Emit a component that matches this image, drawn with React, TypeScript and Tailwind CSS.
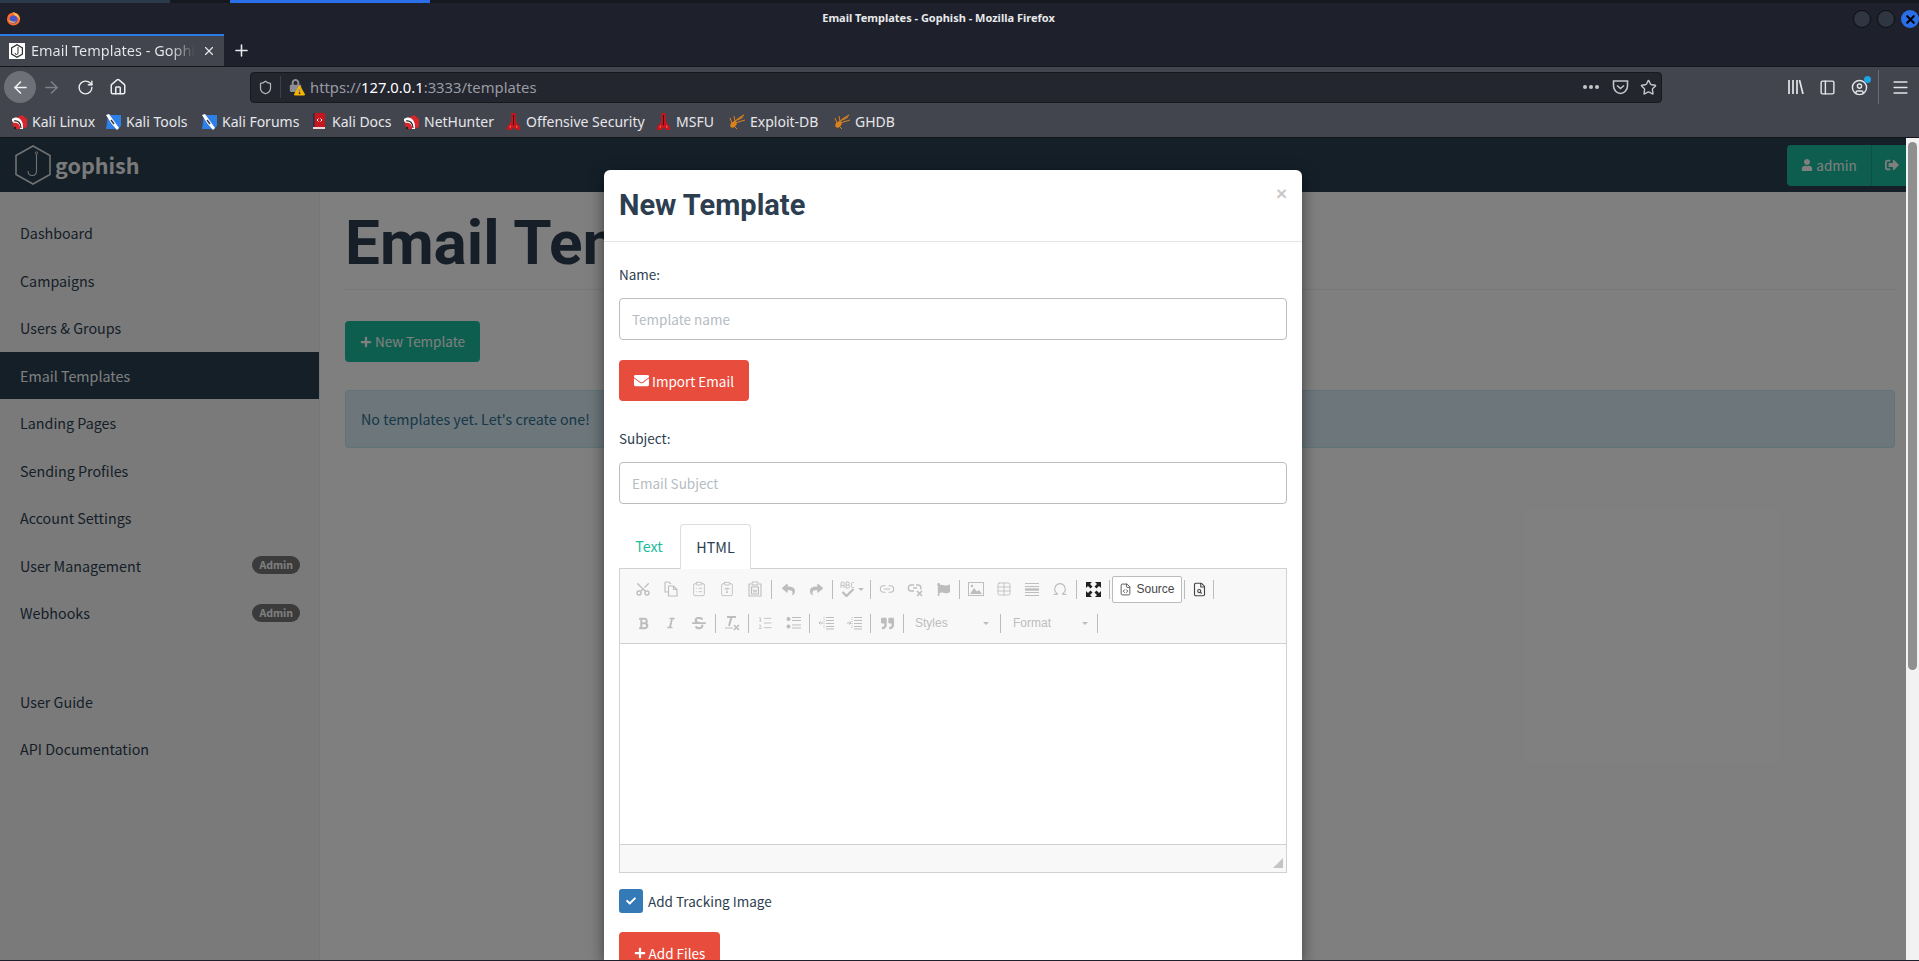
import {
  Scissors, ClipboardList, ClipboardType, Table, Omega, Link2,
  ListOrdered, FileCode, FileSearch, RotateCw, Home, ArrowLeft, ArrowRight, Shield,
  Star, PanelLeft, CircleUser, Menu, Plus, X,
} from "lucide-react";
import { FaUser, FaSignOutAlt, FaEnvelope, FaPlus, FaCheck, FaReply, FaShare, FaFlag, FaQuoteRight, FaLock, FaExclamationTriangle, FaBold, FaItalic, FaStrikethrough } from "react-icons/fa";
import type { ReactNode } from "react";

const srcSans = "font-['Noto_Sans_CJK_SC','Noto_Sans',sans-serif]";

function KaliIcon() {
  return (
    <svg width="17" height="16" viewBox="0 0 17 16">
      <path d="M1 6 L11 1 L16 5 L16 13 L11 15 L3 15 Z" fill="#d8262c" />
      <path d="M1 5 C6 1 13 5 12 15 L9 15 C9.5 10 6 8 3 9 L1 7 Z" fill="#fff" />
      <path d="M3 7 C7 6 10 9 10 14" fill="none" stroke="#222" strokeWidth="1.2" />
      <circle cx="4" cy="14" r="1.2" fill="#222" />
    </svg>
  );
}

function ToolsIcon() {
  return (
    <svg width="17" height="16" viewBox="0 0 17 16">
      <path d="M3 1 H16 V12 L13 15 H1 Z" fill="#2f7fe8" />
      <path d="M1 1 L4 0 L9 7 L14 14 L12 16 L6 9 Z" fill="#fff" />
      <path d="M6 6 L9 10" stroke="#333" strokeWidth="1.4" />
    </svg>
  );
}

function DocsIcon() {
  return (
    <svg width="14" height="17" viewBox="0 0 14 17">
      <rect x="1" y="0" width="12" height="14" fill="#c4161c" />
      <rect x="1" y="14" width="12" height="2" fill="#e8d8d8" />
      <rect x="1" y="0" width="1.5" height="14" fill="#1f2a55" />
      <path d="M5 7 L6.5 5.5 M5 7 L6.5 8.5 M10 7 L8.5 5.5 M10 7 L8.5 8.5" stroke="#fff" strokeWidth="1" />
    </svg>
  );
}

function DartIcon() {
  return (
    <svg width="15" height="18" viewBox="0 0 15 18">
      <path d="M5.5 0 H9.5 L10 9 L14 14 V17 H9.5 L8.5 15 H6.5 L5.5 17 H1 V14 L5 9 Z" fill="#c8141c" />
      <path d="M7 2 H8 V12 H7 Z" fill="#3a0a0c" />
      <path d="M3 14 L5 12 V15 Z M12 14 L10 12 V15 Z" fill="#ef5a5a" />
    </svg>
  );
}

function MothIcon() {
  return (
    <svg width="18" height="16" viewBox="0 0 18 16" fill="none" stroke="#d9821e">
      <path d="M3 13 C5 8 9 5 16 1" strokeWidth="1.2" />
      <path d="M7 9 L17 6 M5 11 L9 15 M4 9 L2 4 M7 7 L6 2 M10 6 L15 3" strokeWidth="1" />
      <ellipse cx="5.5" cy="10.5" rx="3.5" ry="2.5" fill="#d9821e" stroke="none" transform="rotate(-40 5.5 10.5)" />
    </svg>
  );
}

function Bookmark({ icon, label, width }: { icon: ReactNode; label: string; width: string }) {
  return (
    <div className={`flex items-center gap-[4px] ${width}`}>
      <span className="flex w-[18px] justify-center">{icon}</span>
      <span className="text-[14px] text-[#e6e7ea] whitespace-nowrap">{label}</span>
    </div>
  );
}

function Browser() {
  return (
    <div className="font-['Noto_Sans',sans-serif]">
      <div className="flex h-[3px] bg-[#16181f]">
        <div className="w-[170px] bg-[#2a3a4a]" />
        <div className="w-[60px]" />
        <div className="w-[200px] bg-[#2a6fe8]" />
      </div>
      <div className="relative flex h-[31px] items-center justify-center bg-[#1e212b] pr-[42px]">
        <svg className="absolute left-[6px] top-[8px]" width="15" height="15" viewBox="0 0 16 16">
          <circle cx="8" cy="8.5" r="7" fill="#ff6a2b" />
          <path d="M7 1 C11 2 15 5 15 10 C13 6 11 6 9.5 5 Z" fill="#ffbd4f" />
          <circle cx="8" cy="9" r="4.2" fill="#4a55c9" />
          <path d="M3 9 C4 13 9 14 12 10 C10 12 6 12 3 9 Z" fill="#ffd14a" />
        </svg>
        <span className="text-[11px] font-bold text-[#e8e9ec]">Email Templates - Gophish - Mozilla Firefox</span>
        <div className="absolute right-0 top-[7px] flex gap-[6px]">
          <div className="h-[18px] w-[18px] rounded-full border border-[#0c0d12] bg-[#2f3541]" />
          <div className="h-[18px] w-[18px] rounded-full border border-[#0c0d12] bg-[#2f3541]" />
          <div className="flex h-[18px] w-[18px] items-center justify-center rounded-full bg-[#2a6fe8]">
            <X size={13} strokeWidth={4} className="text-black" />
          </div>
        </div>
      </div>
      <div className="flex h-[33px] items-stretch border-b border-[#14161c] bg-[#1e212b]">
        <div className="flex w-[224px] items-center border-t-2 border-[#2a7ae8] bg-[#42454e] pl-[9px] pr-[8px]">
          <svg width="16" height="16" viewBox="0 0 16 16" className="shrink-0">
            <rect width="16" height="16" fill="#fff" />
            <path d="M8 1 L14 4.5 V11.5 L8 15 L2 11.5 V4.5 Z" fill="#333" />
            <path d="M8 2.5 L12.8 5.2 V10.8 L8 13.5 L3.2 10.8 V5.2 Z" fill="#fff" />
            <path d="M9 4 V10 C9 12 6 12 6 10" fill="none" stroke="#333" strokeWidth="1" />
          </svg>
          <span className="ml-[6px] w-[164px] overflow-hidden whitespace-nowrap bg-linear-to-r from-[#e8e9ec] from-85% to-transparent bg-clip-text text-[14.5px] text-transparent">Email Templates - Gophish</span>
          <X size={14} className="ml-auto text-[#e8e9ec]" />
        </div>
        <div className="flex w-[34px] items-center justify-center">
          <Plus size={19} className="text-[#e8e9ec]" />
        </div>
      </div>
      <div className="bg-[#42454e]">
        <div className="flex h-[38px] items-center pt-[2px]">
          <div className="ml-[4px] flex h-[32px] w-[32px] items-center justify-center rounded-full bg-[#6e7077]">
            <ArrowLeft size={19} className="text-[#f2f2f4]" />
          </div>
          <ArrowRight size={19} className="ml-[6px] text-[#7e8087]" />
          <RotateCw size={17} className="ml-[16px] text-[#eceded]" />
          <Home size={18} className="ml-[15px] text-[#eceded]" />
          <div className="ml-[123px] flex h-[31px] w-[1412px] items-center rounded-[4px] border border-[#17191f] bg-[#23252f]">
            <Shield size={15} className="ml-[7px] text-[#b4b5b9]" />
            <div className="ml-[7px] h-[22px] w-px bg-[#3e4049]" />
            <div className="relative ml-[8px] h-[18px] w-[16px]">
              <FaLock size={13} className="absolute left-0 top-[1px] text-[#8c8e94]" />
              <FaExclamationTriangle size={11} className="absolute left-[5px] top-[7px] text-[#f5b400]" />
            </div>
            <span className="ml-[5px] text-[14.8px] text-[#9a9ca3]">
              https://<span className="text-white">127.0.0.1</span>:3333/templates
            </span>
            <div className="ml-auto flex items-center">
              <div className="flex gap-[2px]">
                <div className="h-[4px] w-[4px] rounded-full bg-[#c4c5c8]" />
                <div className="h-[4px] w-[4px] rounded-full bg-[#c4c5c8]" />
                <div className="h-[4px] w-[4px] rounded-full bg-[#c4c5c8]" />
              </div>
              <svg className="ml-[13px]" width="17" height="16" viewBox="0 0 17 16" fill="none" stroke="#c4c5c8" strokeWidth="1.6">
                <path d="M1.5 2 H15.5 V7 C15.5 11 12 14.5 8.5 14.5 C5 14.5 1.5 11 1.5 7 Z" />
                <path d="M5 6.5 L8.5 9.5 L12 6.5" />
              </svg>
              <Star size={17} strokeWidth={2} className="ml-[11px] mr-[4px] text-[#c4c5c8]" />
            </div>
          </div>
          <svg className="ml-[126px]" width="16" height="14" viewBox="0 0 16 14" stroke="#e4e5e8" strokeWidth="1.7">
            <path d="M1 0 V14 M5 0 V14 M9 0 V14 M11.5 0 L15 14" />
          </svg>
          <PanelLeft size={17} className="ml-[15px] text-[#e4e5e8]" />
          <div className="relative ml-[15px]">
            <CircleUser size={17} className="text-[#e4e5e8]" />
            <div className="absolute -right-[3px] -top-[3px] h-[7px] w-[7px] rounded-full bg-[#19a5e6]" />
          </div>
          <div className="ml-[10px] h-[34px] w-px bg-[#6a6c73]" />
          <Menu size={19} className="ml-[12px] text-[#e4e5e8]" />
        </div>
        <div className="flex h-[33px] items-center border-b border-[#14161c] pl-[10px] pt-[1px]">
          <Bookmark icon={<KaliIcon />} label="Kali Linux" width="w-[94px]" />
          <Bookmark icon={<ToolsIcon />} label="Kali Tools" width="w-[96px]" />
          <Bookmark icon={<ToolsIcon />} label="Kali Forums" width="w-[110px]" />
          <Bookmark icon={<DocsIcon />} label="Kali Docs" width="w-[92px]" />
          <Bookmark icon={<KaliIcon />} label="NetHunter" width="w-[102px]" />
          <Bookmark icon={<DartIcon />} label="Offensive Security" width="w-[150px]" />
          <Bookmark icon={<DartIcon />} label="MSFU" width="w-[74px]" />
          <Bookmark icon={<MothIcon />} label="Exploit-DB" width="w-[105px]" />
          <Bookmark icon={<MothIcon />} label="GHDB" width="w-[70px]" />
        </div>
      </div>
    </div>
  );
}

const navItems = [
  { label: "Dashboard" },
  { label: "Campaigns" },
  { label: "Users & Groups" },
  { label: "Email Templates", active: true },
  { label: "Landing Pages" },
  { label: "Sending Profiles" },
  { label: "Account Settings" },
  { label: "User Management", badge: true },
  { label: "Webhooks", badge: true },
];

function NavRow({ label, active, badge }: { label: string; active?: boolean; badge?: boolean }) {
  return (
    <div className={`flex h-[47.5px] items-center justify-between pl-[20px] pr-[19px] text-[14.3px] ${active ? "bg-[#283f50] text-white" : "text-[#2c3e50]"}`}>
      <span>{label}</span>
      {badge && (
        <span className="rounded-full bg-[#777] px-[7px] text-[10.5px] font-bold leading-[18px] text-white">Admin</span>
      )}
    </div>
  );
}

function Page() {
  return (
    <div className={`flex h-full flex-col bg-white ${srcSans}`}>
      <div className="flex h-[54px] shrink-0 items-center justify-between bg-[#283f50] pl-[15px]">
        <div className="flex items-center gap-[4px]">
          <svg width="36" height="40" viewBox="0 0 36 40" fill="none" stroke="#e4e4e4" strokeWidth="1.6">
            <path d="M18 1 L35 10.5 V29.5 L18 39 L1 29.5 V10.5 Z" />
            <path d="M21.5 9 V26 C21.5 32 13 32 13 26" strokeWidth="1.1" />
            <circle cx="21.5" cy="8" r="1.2" strokeWidth="0.8" />
          </svg>
          <span className="text-[21.5px] font-bold leading-none text-[#f4f4f4]">gophish</span>
        </div>
        <div className="flex h-[41px] w-[119px] items-center rounded-l-[4px] bg-[#1abc9c] text-[13.5px] text-white">
          <div className="flex h-full w-[85px] items-center justify-center gap-[3px] border-r border-[#16a085]">
            <FaUser size={12} />
            <span>admin</span>
          </div>
          <FaSignOutAlt size={14} className="ml-[13px]" />
        </div>
      </div>
      <div className="flex flex-1">
        <div className="w-[320px] border-r border-[#eee] bg-[#f5f5f5] pt-[17px]">
          {navItems.map((n) => (
            <NavRow key={n.label} {...n} />
          ))}
          <div className="mt-[41px]">
            <NavRow label="User Guide" />
            <NavRow label="API Documentation" />
          </div>
        </div>
        <div className="flex-1 pl-[25px] pr-[11px]">
          <div className="mt-[14px] h-[84px] overflow-hidden whitespace-nowrap border-b border-[#eee] font-['Roboto',sans-serif] text-[62px] font-bold leading-[74px] text-[#2c3e50]">
            Email Templates
          </div>
          <div className="mt-[31px] flex h-[41px] w-[135px] items-center justify-center gap-[3px] rounded-[4px] bg-[#1abc9c] text-[13.5px] text-white">
            <FaPlus size={12} />
            <span>New Template</span>
          </div>
          <div className="mt-[28px] flex h-[58px] items-center rounded-[4px] border border-[#bce8f1] bg-[#d9edf7] pl-[15px] text-[14.3px] text-[#31708f]">
            No templates yet. Let's create one!
          </div>
        </div>
      </div>
    </div>
  );
}

function Tool({ children, w = "w-[28px]" }: { children: ReactNode; w?: string }) {
  return <div className={`flex h-[24px] shrink-0 items-center justify-center text-[#bdbdbd] ${w}`}>{children}</div>;
}

function Sep() {
  return <div className="mx-[2px] h-[19px] w-px shrink-0 bg-[#bcbcbc]" />;
}

function MaximizeIcon() {
  return (
    <svg width="15" height="15" viewBox="0 0 15 15" fill="#222">
      <path d="M0 0 H6 L4 2 L6.5 4.5 L4.5 6.5 L2 4 L0 6 Z" />
      <path d="M15 0 V6 L13 4 L10.5 6.5 L8.5 4.5 L11 2 L9 0 Z" />
      <path d="M0 15 V9 L2 11 L4.5 8.5 L6.5 10.5 L4 13 L6 15 Z" />
      <path d="M15 15 H9 L11 13 L8.5 10.5 L10.5 8.5 L13 11 L15 9 Z" />
    </svg>
  );
}

function HrIcon() {
  return (
    <svg width="14" height="15" viewBox="0 0 14 15" stroke="#bdbdbd">
      <path d="M0 1.5 H14 M0 4.5 H14 M0 10.5 H14 M0 13.5 H14" strokeWidth="1" />
      <path d="M0 7.5 H14" strokeWidth="2.4" />
    </svg>
  );
}

function CopyIcon() {
  return (
    <svg width="14" height="16" viewBox="0 0 14 16" fill="none" stroke="#bdbdbd" strokeWidth="1.1">
      <path d="M1 1 H5 L7 3" />
      <path d="M1 1 V11 H4" />
      <path d="M4.5 5 H9.5 L13 8.5 V15 H4.5 Z" />
      <path d="M9.5 5 V8.5 H13" />
    </svg>
  );
}

function SpellIcon() {
  return (
    <svg width="16" height="16" viewBox="0 0 16 16" fill="none" stroke="#bdbdbd">
      <path d="M1 7 V2 Q1 1 2 1 H3 Q4 1 4 2 V7 M1 4.5 H4" strokeWidth="0.9" />
      <path d="M6 7 V1 H8 Q9.3 1 9.3 2.5 Q9.3 4 8 4 H6 M8 4 Q9.6 4 9.6 5.5 Q9.6 7 8 7 H6" strokeWidth="0.9" />
      <path d="M14 1.5 H12.5 Q11.5 1.5 11.5 2.5 V5.5 Q11.5 6.5 12.5 6.5 H14" strokeWidth="0.9" />
      <path d="M2.5 11 L6.5 15 L13.5 8" strokeWidth="2.2" />
    </svg>
  );
}

function WordPasteIcon() {
  return (
    <svg width="16" height="16" viewBox="0 0 16 16" fill="none" stroke="#bdbdbd" strokeWidth="1.1">
      <path d="M4 3 H2 V15 H14 V3 H12" />
      <rect x="5" y="1" width="6" height="3" rx="1" />
      <rect x="4.5" y="6" width="7" height="7" />
      <path d="M6 8 L7 11.5 L8 9 L9 11.5 L10 8" strokeWidth="0.8" />
    </svg>
  );
}

function UnlinkIcon() {
  return (
    <svg width="16" height="16" viewBox="0 0 16 16" fill="none" stroke="#bdbdbd" strokeWidth="1.4">
      <path d="M7 4 H4 C0.5 4 0.5 10 4 10 H7" />
      <path d="M6 7 H10" />
      <path d="M9 4 H11 C14 4 14.5 7 13.5 8.5" />
      <path d="M10 10 L15 15 M15 10 L10 15" strokeWidth="1.6" />
    </svg>
  );
}

function ImageIcon() {
  return (
    <svg width="16" height="14" viewBox="0 0 16 14">
      <rect x="0.5" y="0.5" width="15" height="13" fill="none" stroke="#bdbdbd" />
      <path d="M2 12 L6 6 L9 9.5 L11 8 L14 12 Z" fill="#bdbdbd" />
      <circle cx="4" cy="4" r="1.2" fill="#bdbdbd" />
    </svg>
  );
}

function RemoveFormatIcon() {
  return (
    <svg width="16" height="16" viewBox="0 0 16 16" fill="none" stroke="#bdbdbd">
      <path d="M3 2 H12 M7.5 2 L5 11" strokeWidth="2" />
      <path d="M1 13 H9" strokeWidth="1" />
      <path d="M10 10 L15 15 M15 10 L10 15" strokeWidth="1.6" />
    </svg>
  );
}

function BulletIcon() {
  return (
    <svg width="15" height="14" viewBox="0 0 15 14" fill="#bdbdbd" stroke="#bdbdbd">
      <circle cx="2.5" cy="3" r="2" stroke="none" />
      <circle cx="2.5" cy="10.5" r="2" stroke="none" />
      <path d="M6 1.5 H15 M6 4.5 H15 M6 9 H15 M6 12 H15" strokeWidth="1" />
    </svg>
  );
}

function IndentIcon({ flip }: { flip?: boolean }) {
  return (
    <svg width="15" height="14" viewBox="0 0 15 14" fill="none" stroke="#bdbdbd" strokeWidth="1">
      <path d="M7 1.5 H15 M7 4.5 H15 M7 7.5 H15 M7 10.5 H15 M7 13 H15" />
      <path d="M5 1 V13" strokeDasharray="1 1" />
      <path d={flip ? "M4 7 H0 M1.5 5.5 L0 7 L1.5 8.5" : "M0 7 H4 M2.5 5.5 L4 7 L2.5 8.5"} />
    </svg>
  );
}

function Editor() {
  const s = 16;
  const sw = 1.3;
  return (
    <div className="h-[305px] border border-[#d1d1d1]">
      <div className="h-[75px] border-b border-[#d1d1d1] bg-[#f8f8f8] pl-[9px] pt-[7px] font-['Liberation_Sans',sans-serif]">
        <div className="flex h-[26px] items-center">
          <Tool><Scissors size={s} strokeWidth={2} className="-rotate-90" /></Tool>
          <Tool><CopyIcon /></Tool>
          <Tool><ClipboardList size={s} strokeWidth={sw} /></Tool>
          <Tool><ClipboardType size={s} strokeWidth={sw} /></Tool>
          <Tool><WordPasteIcon /></Tool>
          <Sep />
          <Tool><FaReply size={13} /></Tool>
          <Tool><FaShare size={13} /></Tool>
          <Sep />
          <Tool w="w-[33px]">
            <SpellIcon />
            <span className="ml-[2px] h-0 w-0 border-x-[3px] border-t-[3px] border-x-transparent border-t-[#bdbdbd]" />
          </Tool>
          <Sep />
          <Tool><Link2 size={s} strokeWidth={1.6} /></Tool>
          <Tool><UnlinkIcon /></Tool>
          <Tool><FaFlag size={13} /></Tool>
          <Sep />
          <Tool><ImageIcon /></Tool>
          <Tool><Table size={s} strokeWidth={sw} /></Tool>
          <Tool><HrIcon /></Tool>
          <Tool><Omega size={s} strokeWidth={1.8} /></Tool>
          <Sep />
          <Tool><MaximizeIcon /></Tool>
          <Sep />
          <div className="flex h-[27px] w-[70px] shrink-0 items-center justify-center gap-[4px] rounded-[2px] border border-[#bcbcbc] bg-white text-[12px] text-[#474747]">
            <FileCode size={13} strokeWidth={1.6} />
            Source
          </div>
          <Sep />
          <Tool w="w-[24px]"><FileSearch size={15} strokeWidth={1.8} className="text-[#444]" /></Tool>
          <Sep />
        </div>
        <div className="mt-[8px] flex h-[26px] items-center">
          <Tool><FaBold size={13} /></Tool>
          <Tool><FaItalic size={12} /></Tool>
          <Tool><FaStrikethrough size={14} /></Tool>
          <Sep />
          <Tool><RemoveFormatIcon /></Tool>
          <Sep />
          <Tool><ListOrdered size={s} strokeWidth={sw} /></Tool>
          <Tool><BulletIcon /></Tool>
          <Sep />
          <Tool><IndentIcon flip /></Tool>
          <Tool><IndentIcon /></Tool>
          <Sep />
          <Tool><FaQuoteRight size={13} /></Tool>
          <Sep />
          <div className="flex w-[92px] items-center justify-between pl-[9px] pr-[9px] text-[12px] text-[#bdbdbd]">
            Styles
            <span className="h-0 w-0 border-x-[3px] border-t-[3px] border-x-transparent border-t-[#bdbdbd]" />
          </div>
          <Sep />
          <div className="flex w-[92px] items-center justify-between pl-[10px] pr-[7px] text-[12px] text-[#bdbdbd]">
            Format
            <span className="h-0 w-0 border-x-[3px] border-t-[3px] border-x-transparent border-t-[#bdbdbd]" />
          </div>
          <Sep />
        </div>
      </div>
      <div className="h-[200px] bg-white" />
      <div className="relative h-[28px] border-t border-[#d1d1d1] bg-[#f8f8f8]">
        <div className="absolute bottom-[4px] right-[3px] h-0 w-0 border-b-[10px] border-l-[10px] border-b-[#c4c4c4] border-l-transparent" />
      </div>
    </div>
  );
}

function TextInput({ placeholder }: { placeholder: string }) {
  return (
    <div className="flex h-[42px] items-center rounded-[4px] border border-[#bcbcbc] pl-[12px] text-[13.5px] text-[#b5bcc2]">
      {placeholder}
    </div>
  );
}

function Modal() {
  return (
    <div className={`relative w-[698px] rounded-t-[6px] bg-white shadow-[0_5px_15px_rgba(0,0,0,0.5)] ${srcSans}`}>
      <div className="flex h-[72px] items-center border-b border-[#e5e5e5] px-[15px]">
        <h1 className="font-['Roboto',sans-serif] text-[29px] font-bold text-[#2c3e50]">New Template</h1>
      </div>
      <span className="absolute right-[15px] top-[14px] font-['Liberation_Sans',sans-serif] text-[19px] font-bold leading-none text-[#c8c8c8]">×</span>
      <div className="px-[15px] text-[13.5px] leading-[22px] text-[#2c3e50]">
        <div className="pt-[21px]">Name:</div>
        <div className="mt-[13px]"><TextInput placeholder="Template name" /></div>
        <div className="mt-[20px] flex h-[41px] w-[130px] items-center justify-center gap-[3px] rounded-[4px] bg-[#e74c3c] text-white">
          <FaEnvelope size={15} />
          Import Email
        </div>
        <div className="mt-[26px]">Subject:</div>
        <div className="mt-[13px]"><TextInput placeholder="Email Subject" /></div>
        <div className="mt-[20px] flex h-[44px] items-stretch text-[14.3px]">
          <div className="flex w-[60px] items-center justify-center text-[#1abc9c]">Text</div>
          <div className="relative -mb-px ml-px flex w-[71px] items-center justify-center rounded-t-[4px] border border-b-0 border-[#ddd] bg-white">HTML</div>
        </div>
        <Editor />
        <div className="mt-[16px] flex items-center gap-[5px]">
          <div className="flex h-[24px] w-[24px] items-center justify-center rounded-[3px] bg-[#337ab7]">
            <FaCheck size={10} className="text-white" />
          </div>
          <span>Add Tracking Image</span>
        </div>
        <div className="mt-[19px] flex h-[41px] w-[101px] items-center justify-center gap-[3px] rounded-[4px] bg-[#e74c3c] text-white">
          <FaPlus size={12} />
          Add Files
        </div>
      </div>
    </div>
  );
}

export default function App() {
  return (
    <div className="flex h-[961px] flex-col overflow-hidden">
      <Browser />
      <div className="flex min-h-0 flex-1">
        <div className="relative flex-1 overflow-hidden">
          <Page />
          <div className="absolute inset-0 flex justify-center bg-black/50 pt-[32px]">
            <Modal />
          </div>
        </div>
        <div className="w-[13px] shrink-0 bg-[#f2f2f2] px-[2px] pt-[4px]">
          <div className="h-[528px] rounded-full bg-[#8f8f8f]" />
        </div>
      </div>
      <div className="h-px shrink-0 bg-[#1e212b]" />
    </div>
  );
}
